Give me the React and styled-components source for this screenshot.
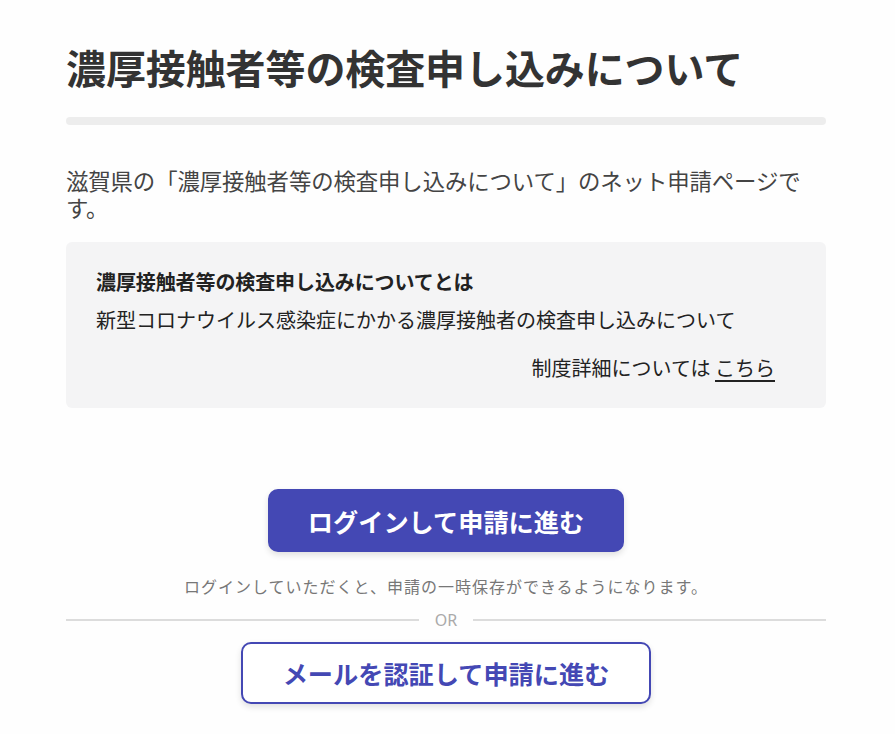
import React from "react";
import styled, { createGlobalStyle } from "styled-components";

const GlobalStyle = createGlobalStyle`
  body {
    margin: 0;
    background: #fefefe;
    font-family: "Noto Sans CJK JP", "Noto Sans", sans-serif;
    color: #333;
  }
`;

const Page = styled.main`
  width: 760px;
  margin: 0 auto;
  padding: 37px 3px 30px 0;
`;

const Title = styled.h1`
  margin: 0;
  font-size: 40px;
  line-height: 60px;
  font-weight: 700;
  color: #333;
  letter-spacing: -0.1px;
`;

const Rule = styled.div`
  height: 8px;
  margin-top: 20px;
  border-radius: 4px;
  background: #ededed;
`;

const Lead = styled.p`
  margin: 42px 0 0;
  font-size: 22.4px;
  line-height: 27px;
  color: #444;
  letter-spacing: -0.1px;
`;

const InfoBox = styled.section`
  margin-top: 21px;
  padding: 25px 30px 25px;
  border-radius: 6px;
  background: #f4f4f5;
  color: #222;
`;

const InfoTitle = styled.h2`
  margin: 0;
  font-size: 20px;
  line-height: 30px;
  font-weight: 700;
  letter-spacing: -0.1px;
`;

const InfoText = styled.p`
  margin: 8px 0 0;
  font-size: 20px;
  line-height: 30px;
`;

const DetailRow = styled.p`
  margin: 18px 0 0;
  padding-right: 21px;
  font-size: 20px;
  line-height: 30px;
  text-align: right;
`;

const DetailLink = styled.a`
  color: #222;
  text-decoration: underline;
  text-underline-offset: 4px;
  text-decoration-thickness: 2px;
`;

const Actions = styled.div`
  display: flex;
  flex-direction: column;
  align-items: center;
  margin-top: 81px;
`;

const Button = styled.button`
  height: ${(p) => (p.$outline ? "62px" : "63px")};
  padding: 0 ${(p) => (p.$outline ? "40px" : "38px")};
  border-radius: 10px;
  border: 2px solid #4448b4;
  background: ${(p) => (p.$outline ? "#fff" : "#4448b4")};
  color: ${(p) => (p.$outline ? "#4448b4" : "#fff")};
  font-family: "Noto Sans CJK JP", "Noto Sans", sans-serif;
  font-size: 25.2px;
  font-weight: 700;
  box-shadow: 0 3px 6px rgba(0, 0, 0, 0.12);
  cursor: pointer;
`;

const Note = styled.p`
  margin: 22px 0 0;
  font-size: 16px;
  line-height: 24px;
  color: #777;
  letter-spacing: 1px;
`;

const Divider = styled.div`
  align-self: stretch;
  display: flex;
  align-items: center;
  gap: 16px;
  margin: 12px 0;
  height: 20px;
  font-family: "Noto Sans", sans-serif;
  font-size: 16px;
  color: #aaa;

  &::before,
  &::after {
    content: "";
    flex: 1;
    height: 2px;
    background: #dcdcdc;
  }
`;

export default function App() {
  return (
    <>
      <GlobalStyle />
      <Page>
        <Title>濃厚接触者等の検査申し込みについて</Title>
        <Rule />
        <Lead>
          滋賀県の「濃厚接触者等の検査申し込みについて」のネット申請ページです。
        </Lead>
        <InfoBox>
          <InfoTitle>濃厚接触者等の検査申し込みについてとは</InfoTitle>
          <InfoText>
            新型コロナウイルス感染症にかかる濃厚接触者の検査申し込みについて
          </InfoText>
          <DetailRow>
            制度詳細については <DetailLink href="#">こちら</DetailLink>
          </DetailRow>
        </InfoBox>
        <Actions>
          <Button>ログインして申請に進む</Button>
          <Note>ログインしていただくと、申請の一時保存ができるようになります。</Note>
          <Divider>OR</Divider>
          <Button $outline>メールを認証して申請に進む</Button>
        </Actions>
      </Page>
    </>
  );
}
